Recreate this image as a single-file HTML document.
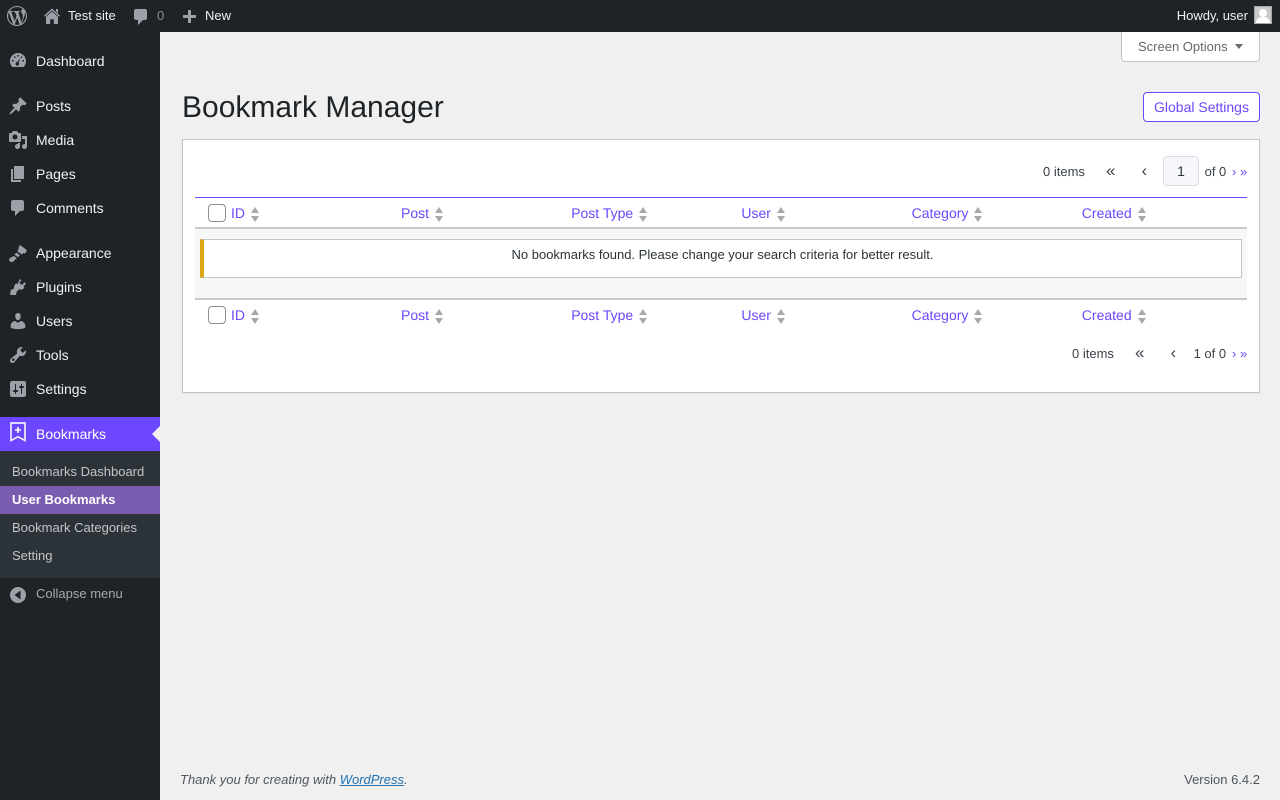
<!DOCTYPE html>
<html lang="en"><head><meta charset="utf-8"><title>Bookmark Manager</title>
<style>
*{box-sizing:border-box}
html,body{margin:0;padding:0;width:1280px;height:800px;overflow:hidden;background:#f0f0f1;font-family:"Liberation Sans",sans-serif;color:#3c434a;font-size:13px}
.a{position:absolute;white-space:nowrap}
#bar{left:0;top:0;width:1280px;height:32px;background:#1d2327}
#side{left:0;top:32px;width:160px;height:768px;background:#1d2327}
.bt{color:#f0f0f1;font-size:13px;line-height:32px;height:32px;top:0}
.m{left:36px;color:#f0f0f1;font-size:14px;line-height:20px;height:20px}
svg{position:absolute;display:block}
.ic{fill:#9ca1a7}
.s{left:12px;color:#c3c4c7;font-size:13px;line-height:18px;height:18px}
.th{color:#6c47ff;font-size:14px;line-height:20px;height:20px;text-rendering:geometricPrecision}
.so{width:10px;height:16px}
.cb{width:18px;height:18px;border:1px solid #8c8f94;border-radius:4px;background:#fff}
.t{font-size:13px;line-height:20px;height:20px;color:#3c434a;text-rendering:geometricPrecision}
.p{font-size:13px;line-height:20px;height:20px;color:#6c47ff;text-rendering:geometricPrecision}
.g{font-size:17px;line-height:20px;color:#3c434a}
</style></head><body>
<div class="a" id="bar"></div>
<div class="a" id="side"></div>

<svg style="left:7px;top:6px" width="20" height="20" viewBox="0 0 20 20"><path class="ic" d="M20 10c0-5.510-4.490-10-10-10C4.480 0 0 4.490 0 10c0 5.520 4.480 10 10 10 5.510 0 10-4.480 10-10zM7.780 15.370L4.370 6.220c.55-.02 1.170-.08 1.170-.08.5-.06.44-1.130-.06-1.110 0 0-1.450.11-2.370.11-.18 0-.37 0-.58-.01C4.120 2.690 6.890 1.050 10 1.050c2.320 0 4.430.88 6.020 2.320-.76-.12-1.850.44-1.850 1.850 0 .88.51 1.620 1.050 2.500.41.72.65 1.600.65 2.880 0 1.730-1.620 5.810-1.620 5.810L11.360 6.300c.61-.03.92-.2.92-.2.5-.05.44-1.240-.06-1.200 0 0-1.530.14-2.520.14-.92 0-2.470-.14-2.470-.14-.5-.02-.56 1.200-.06 1.200l.97.09 1.330 3.620zM17.410 10c.24-.64.74-1.870.43-4.250.7 1.290 1.050 2.710 1.050 4.250 0 3.290-1.730 6.240-4.480 7.830.99-2.670 2-5.180 3-7.830zM6.100 18.090C3.120 16.650 1.110 13.530 1.110 10c0-1.300.23-2.480.72-3.590C3.250 10.300 4.670 14.200 6.100 18.090zm4.030-6.630l2.580 6.980c-.86.29-1.760.45-2.710.45-.79 0-1.570-.11-2.290-.33.81-2.380 1.620-4.740 2.420-7.100z"/></svg>
<svg style="left:44px;top:8px" width="16" height="16" viewBox="0 0 16 16"><path class="ic" d="M8 3.500l6 5.300V16H9.800v-4.700H6.200V16H2V8.800z"/><path d="M.5 8.200L8 1.500l7.500 6.700" fill="none" stroke="#9ca1a7" stroke-width="1.500"/><path class="ic" d="M12 1h2v4l-2-1.800z"/></svg>
<div class="a bt" style="left:68px">Test site</div>
<svg style="left:131px;top:7px" width="20" height="20" viewBox="0 0 20 20"><path class="ic" d="M5 2h9c1.100 0 2 .9 2 2v7c0 1.100-.9 2-2 2h-2l-5 5v-5H5c-1.100 0-2-.9-2-2V4c0-1.100.9-2 2-2z"/></svg>
<div class="a bt" style="left:157px;color:#8c8f94">0</div>
<svg style="left:183px;top:10px" width="13" height="13" viewBox="0 0 13 13"><path class="ic" d="M5 0h3v5h5v3H8v5H5V8H0V5h5z"/></svg>
<div class="a bt" style="left:205px">New</div>
<div class="a bt" style="right:32px">Howdy, user</div>
<svg style="left:1254px;top:6px" width="18" height="18" viewBox="0 0 18 18"><rect width="18" height="18" fill="#a7a7a7"/><rect x="1" y="1" width="16" height="16" fill="#c9c9c9"/><circle cx="9" cy="7" r="4" fill="#fff"/><path d="M2 17c0-4 3-6 7-6s7 2 7 6z" fill="#fff"/></svg>

<svg style="left:10px;top:53px" width="16" height="15" viewBox="0 0 16 15"><path class="ic" d="M8 0a8 8 0 0 1 8 8c0 2.500-1 4.600-2.500 6H2.500A8 8 0 0 1 0 8a8 8 0 0 1 8-8z"/><path d="M10.500 5L8.500 9.500a1.800 1.800 0 1 1-1.500-.4zM4 3.500h1.500V5H4zM7.300 2h1.500v1.500H7.300zM2 7h1.500v1.500H2zM12.500 7H14v1.500h-1.500zM10.800 3.500h1.400V5h-1.400z" fill="#1d2327"/></svg>
<div class="a m" style="top:51px">Dashboard</div>
<svg style="left:8px;top:96px" width="20" height="20" viewBox="0 0 20 20"><path class="ic" d="M10.440 3.020l1.820-1.820 6.360 6.350-1.830 1.820c-1.050-.68-2.480-.57-3.410.36l-.75.75c-.92.93-1.040 2.350-.35 3.410l-1.830 1.820-2.410-2.410-2.800 2.790c-.42.42-3.380 2.710-3.800 2.290s1.860-3.390 2.280-3.810l2.790-2.790L4.100 9.360l1.830-1.820c1.050.69 2.480.57 3.400-.36l.75-.75c.93-.92 1.050-2.350.36-3.410z"/></svg>
<div class="a m" style="top:96px">Posts</div>
<svg style="left:8px;top:130px" width="20" height="20" viewBox="0 0 20 20"><path class="ic" d="M13 11V4c0-.55-.45-1-1-1h-1.670L9 1H5L3.670 3H2c-.55 0-1 .45-1 1v7c0 .55.45 1 1 1h10c.55 0 1-.45 1-1zM7 4.500c1.380 0 2.500 1.120 2.500 2.500S8.380 9.500 7 9.500 4.500 8.380 4.500 7 5.620 4.500 7 4.500zM14 6h5v10.500c0 1.380-1.120 2.500-2.500 2.500S14 17.880 14 16.500s1.120-2.500 2.500-2.500c.17 0 .34.02.5.05V9h-3V6zm-4 8.050V13h2v3.500c0 1.380-1.120 2.500-2.500 2.500S7 17.880 7 16.500 8.120 14 9.500 14c.17 0 .34.02.5.05z"/></svg>
<div class="a m" style="top:130px">Media</div>
<svg style="left:8px;top:164px" width="20" height="20" viewBox="0 0 20 20"><path class="ic" d="M6 15V2h10v13H6zm-1 1h8v2H3V5h2v11z"/></svg>
<div class="a m" style="top:164px">Pages</div>
<svg style="left:8px;top:198px" width="20" height="20" viewBox="0 0 20 20"><path class="ic" d="M5 2h9c1.100 0 2 .9 2 2v7c0 1.100-.9 2-2 2h-2l-5 5v-5H5c-1.100 0-2-.9-2-2V4c0-1.100.9-2 2-2z"/></svg>
<div class="a m" style="top:198px">Comments</div>
<svg style="left:9px;top:245px" width="18" height="17" viewBox="0 0 18 17"><path class="ic" d="M10.800 0l6.700 4.800c.3.800-.1 2.800-1.800 3.800l-1.500-.6-1.400 1.500-4.600-3.400 1.400-1.800-.2-1.400C10 2.100 10.300.6 10.800 0zM7.300 7.500l3.500 2.600-1.800 2.200-3.500-2.600zM5 11l2.800 2.100-3.800 3.500c-.7.6-2.400.5-3.200-.4-.8-1-.9-2.300-.2-2.900z"/></svg>
<div class="a m" style="top:243px">Appearance</div>
<svg style="left:10px;top:279px" width="16" height="16" viewBox="0 0 16 16"><path class="ic" d="M10 0l1.500 1.200L9.300 4l2.700 2 2.300-2.700L16 4.500 13.500 7.800l1 .8-1 1.200c-1.500 1-3 1.200-4.500.5L6.500 13 6 16H0l.8-5 3.200-1.500c-.2-1.500.2-3 1.300-4.200l.8-1.100 1.200 1z"/></svg>
<div class="a m" style="top:277px">Plugins</div>
<svg style="left:8px;top:311px" width="20" height="20" viewBox="0 0 20 20"><path class="ic" d="M10 9.250c-2.270 0-2.730-3.440-2.730-3.440C7 4.020 7.820 2 9.970 2c2.160 0 2.980 2.020 2.710 3.810 0 0-.41 3.440-2.680 3.440zm0 2.570L12.720 10c2.390 0 4.520 2.330 4.520 4.530v2.490s-3.650 1.130-7.240 1.130c-3.650 0-7.240-1.130-7.240-1.130v-2.490c0-2.250 1.940-4.480 4.470-4.480z"/></svg>
<div class="a m" style="top:311px">Users</div>
<svg style="left:8px;top:345px" width="20" height="20" viewBox="0 0 20 20"><path class="ic" d="M16.680 9.770c-1.340 1.340-3.300 1.670-4.950.99l-5.410 6.520c-.99.99-2.590.99-3.570 0-.99-.98-.99-2.580 0-3.570l6.520-5.420c-.68-1.650-.35-3.610.99-4.950 1.280-1.280 3.120-1.620 4.720-1.060l-2.890 2.890 2.820 2.820 2.860-2.870c.53 1.580.18 3.400-1.090 4.670zM4.360 15.640c.51.52 1.340.52 1.850 0 .52-.51.52-1.340 0-1.850-.51-.52-1.340-.52-1.850 0-.52.51-.52 1.340 0 1.850z"/></svg>
<div class="a m" style="top:345px">Tools</div>
<svg style="left:8px;top:379px" width="20" height="20" viewBox="0 0 20 20"><path class="ic" d="M18 16V4c0-1.100-.9-2-2-2H4c-1.100 0-2 .9-2 2v12c0 1.100.9 2 2 2h12c1.100 0 2-.9 2-2zM8 11h1c.55 0 1 .45 1 1s-.45 1-1 1H8v1.500c0 .28-.22.5-.5.5s-.5-.22-.5-.5V13H6c-.55 0-1-.45-1-1s.45-1 1-1h1V5.500c0-.28.22-.5.5-.5s.5.22.5.5V11zm5-2h-1c-.55 0-1-.45-1-1s.45-1 1-1h1V5.500c0-.28.22-.5.5-.5s.5.22.5.5V7h1c.55 0 1 .45 1 1s-.45 1-1 1h-1v5.500c0 .28-.22.5-.5.5s-.5-.22-.5-.5V9z"/></svg>
<div class="a m" style="top:379px">Settings</div>

<div class="a" style="left:0;top:417px;width:160px;height:34px;background:#6c47ff"></div>
<svg style="left:10px;top:422px" width="16" height="20" viewBox="0 0 16 20"><path d="M1 1h14v17.500l-7-3.700-7 3.700z" fill="none" stroke="#f0edff" stroke-width="1.700"/><path d="M7.200 5h1.600v2.200H11v1.600H8.800V11H7.200V8.800H5V7.200h2.200z" fill="#fff"/></svg>
<div class="a m" style="top:424px;color:#fff">Bookmarks</div>
<div class="a" style="left:152px;top:426px;width:0;height:0;border:8px solid transparent;border-left:0;border-right:8px solid #f0f0f1"></div>

<div class="a" style="left:0;top:451px;width:160px;height:127px;background:#2c3338"></div>
<div class="a s" style="top:463px">Bookmarks Dashboard</div>
<div class="a" style="left:0;top:486px;width:160px;height:28px;background:#7a5cb0"></div>
<div class="a s" style="top:491px;color:#fff;font-weight:700">User Bookmarks</div>
<div class="a s" style="top:519px">Bookmark Categories</div>
<div class="a s" style="top:547px">Setting</div>
<svg style="left:10px;top:587px" width="16" height="16" viewBox="0 0 16 16"><path class="ic" fill-rule="evenodd" d="M8 0a8 8 0 1 1 0 16A8 8 0 0 1 8 0zm2.500 3.500L4.500 8l6 4.500z"/></svg>
<div class="a" style="left:36px;top:585px;font-size:13px;line-height:18px;color:#a7aaad">Collapse menu</div>

<div class="a" style="left:1121px;top:32px;width:139px;height:30px;background:#fff;border:1px solid #c3c4c7;border-top:0;border-radius:0 0 4px 4px"></div>
<div class="a" style="left:1138px;top:38px;font-size:13px;line-height:18px;color:#646970;text-rendering:geometricPrecision">Screen Options</div>
<div class="a" style="left:1235px;top:44px;width:0;height:0;border-left:4.500px solid transparent;border-right:4.500px solid transparent;border-top:5.500px solid #646970"></div>

<div class="a" style="left:182px;top:88px;font-size:30px;line-height:40px;color:#1d2327;text-rendering:geometricPrecision">Bookmark Manager</div>
<div class="a" style="left:1143px;top:92px;width:117px;height:30px;background:#fff;border:1px solid #6c47ff;border-radius:4px;color:#6c47ff;font-size:14px;line-height:28px;text-align:center;text-rendering:geometricPrecision">Global Settings</div>

<div class="a" style="left:182px;top:139px;width:1078px;height:254px;background:#fff;border:1px solid #c3c4c7;box-shadow:0 1px 1px rgba(0,0,0,.04)"></div>

<div class="a t" style="left:1043px;top:162px">0 items</div>
<div class="a g" style="left:1106px;top:161px">«</div>
<div class="a g" style="left:1141.5px;top:161px">‹</div>
<div class="a" style="left:1163px;top:156px;width:36px;height:30px;background:#f6f7fb;border:1px solid #dcdce6;border-radius:4px;font-size:14px;line-height:28px;text-align:center;color:#2c3338">1</div>
<div class="a t" style="left:1204.6px;top:162px">of 0</div>
<div class="a p" style="left:1232px;top:162px">› »</div>

<div class="a" style="left:195px;top:197px;width:1052px;height:1px;background:#6c47ff"></div>
<div class="a" style="left:195px;top:227px;width:1052px;height:2px;background:#c3c9cd"></div>
<div class="a" style="left:195px;top:229px;width:1052px;height:69px;background:#f6f7f7"></div>
<div class="a" style="left:200px;top:239px;width:1042px;height:39px;background:#fff;border:1px solid #c3c4c7;border-left:4px solid #dba617;font-size:13px;line-height:30px;color:#2c3338;text-align:center">No bookmarks found. Please change your search criteria for better result.</div>
<div class="a" style="left:195px;top:298px;width:1052px;height:2px;background:#c3c9cd"></div>

<div class="a cb" style="left:208px;top:204px"></div>
<div class="a th" style="left:231px;top:203px">ID</div>
<svg class="a so" style="left:250px;top:206px" viewBox="0 0 10 16"><path d="M5 1l4 6H1zM5 16L1 10h8z" fill="#a7aaad"/></svg>
<div class="a th" style="left:401px;top:203px">Post</div>
<svg class="a so" style="left:434px;top:206px" viewBox="0 0 10 16"><path d="M5 1l4 6H1zM5 16L1 10h8z" fill="#a7aaad"/></svg>
<div class="a th" style="left:571.2px;top:203px">Post Type</div>
<svg class="a so" style="left:638px;top:206px" viewBox="0 0 10 16"><path d="M5 1l4 6H1zM5 16L1 10h8z" fill="#a7aaad"/></svg>
<div class="a th" style="left:741.4px;top:203px">User</div>
<svg class="a so" style="left:776px;top:206px" viewBox="0 0 10 16"><path d="M5 1l4 6H1zM5 16L1 10h8z" fill="#a7aaad"/></svg>
<div class="a th" style="left:911.6px;top:203px">Category</div>
<svg class="a so" style="left:973px;top:206px" viewBox="0 0 10 16"><path d="M5 1l4 6H1zM5 16L1 10h8z" fill="#a7aaad"/></svg>
<div class="a th" style="left:1081.8px;top:203px">Created</div>
<svg class="a so" style="left:1137px;top:206px" viewBox="0 0 10 16"><path d="M5 1l4 6H1zM5 16L1 10h8z" fill="#a7aaad"/></svg>

<div class="a cb" style="left:208px;top:306px"></div>
<div class="a th" style="left:231px;top:305px">ID</div>
<svg class="a so" style="left:250px;top:308px" viewBox="0 0 10 16"><path d="M5 1l4 6H1zM5 16L1 10h8z" fill="#a7aaad"/></svg>
<div class="a th" style="left:401px;top:305px">Post</div>
<svg class="a so" style="left:434px;top:308px" viewBox="0 0 10 16"><path d="M5 1l4 6H1zM5 16L1 10h8z" fill="#a7aaad"/></svg>
<div class="a th" style="left:571.2px;top:305px">Post Type</div>
<svg class="a so" style="left:638px;top:308px" viewBox="0 0 10 16"><path d="M5 1l4 6H1zM5 16L1 10h8z" fill="#a7aaad"/></svg>
<div class="a th" style="left:741.4px;top:305px">User</div>
<svg class="a so" style="left:776px;top:308px" viewBox="0 0 10 16"><path d="M5 1l4 6H1zM5 16L1 10h8z" fill="#a7aaad"/></svg>
<div class="a th" style="left:911.6px;top:305px">Category</div>
<svg class="a so" style="left:973px;top:308px" viewBox="0 0 10 16"><path d="M5 1l4 6H1zM5 16L1 10h8z" fill="#a7aaad"/></svg>
<div class="a th" style="left:1081.8px;top:305px">Created</div>
<svg class="a so" style="left:1137px;top:308px" viewBox="0 0 10 16"><path d="M5 1l4 6H1zM5 16L1 10h8z" fill="#a7aaad"/></svg>

<div class="a t" style="left:1072px;top:344px">0 items</div>
<div class="a g" style="left:1135px;top:343px">«</div>
<div class="a g" style="left:1170.5px;top:343px">‹</div>
<div class="a t" style="left:1193.6px;top:344px">1 of 0</div>
<div class="a p" style="left:1232px;top:344px">› »</div>

<div class="a" style="left:180px;top:770px;font-size:13px;line-height:20px;font-style:italic;color:#50575e">Thank you for creating with <span style="color:#2271b1;text-decoration:underline">WordPress</span>.</div>
<div class="a" style="right:20px;top:770px;font-size:13px;line-height:20px;color:#50575e">Version 6.4.2</div>
</body></html>
